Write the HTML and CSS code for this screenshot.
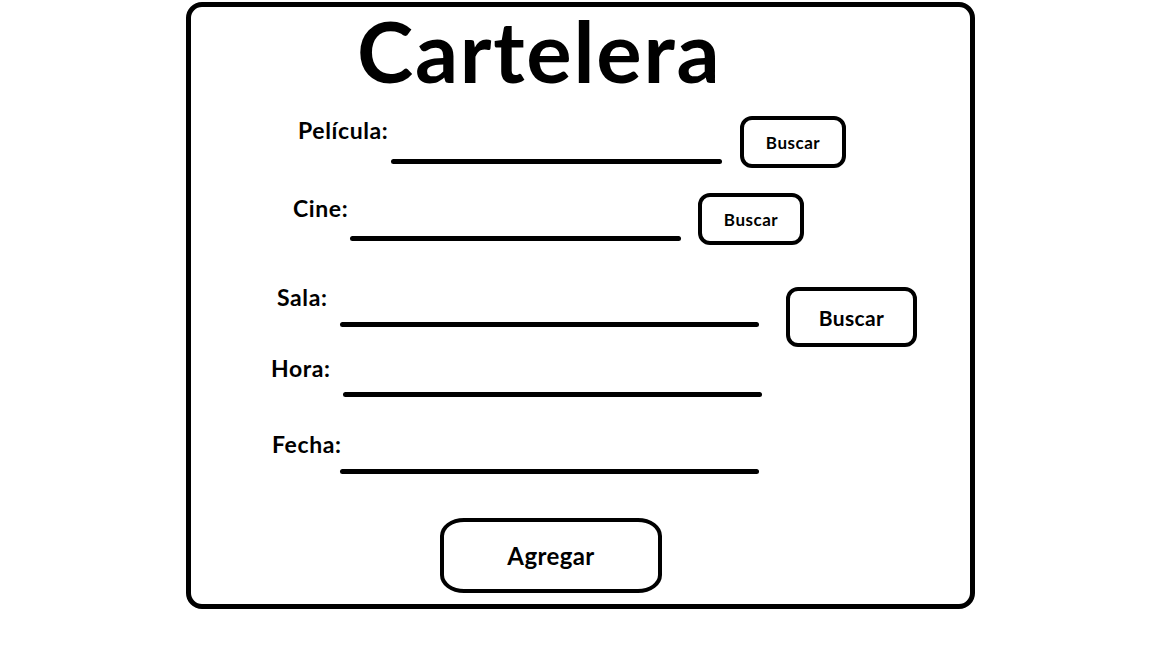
FILE: index.html
```html
<!DOCTYPE html>
<html lang="es">
<head>
<meta charset="utf-8">
<title>Cartelera</title>
<link rel="stylesheet" href="styles.css">
</head>
<body>
<div class="card">
  <h1 class="title">Cartelera</h1>
  <div class="row row-pelicula">
    <span class="label">Película:</span>
    <span class="line"></span>
    <button class="btn btn-sm">Buscar</button>
  </div>
  <div class="row row-cine">
    <span class="label">Cine:</span>
    <span class="line"></span>
    <button class="btn btn-sm">Buscar</button>
  </div>
  <div class="row row-sala">
    <span class="label">Sala:</span>
    <span class="line"></span>
    <button class="btn btn-md">Buscar</button>
  </div>
  <div class="row row-hora">
    <span class="label">Hora:</span>
    <span class="line"></span>
  </div>
  <div class="row row-fecha">
    <span class="label">Fecha:</span>
    <span class="line"></span>
  </div>
  <div class="actions">
    <button class="btn btn-lg">Agregar</button>
  </div>
</div>
</body>
</html>
```

FILE: styles.css
```css
html, body {
  margin: 0;
  padding: 0;
  background: #fff;
}
body {
  font-family: Lato, "Liberation Sans", sans-serif;
  color: #000;
}
.card {
  box-sizing: border-box;
  margin: 2px 0 0 186px;
  width: 789px;
  height: 607px;
  border: 5px solid #000;
  border-radius: 16px;
  display: flex;
  flex-direction: column;
}
.title {
  margin: 0;
  padding-left: 166px;
  font-size: 85px;
  line-height: 86px;
  font-weight: 700;
  letter-spacing: 1.75px;
}
.row {
  display: flex;
  align-items: flex-start;
}
.label {
  font-size: 23px;
  line-height: 26px;
  font-weight: 700;
  letter-spacing: 0.6px;
  white-space: nowrap;
  flex: none;
}
.line {
  display: block;
  height: 5px;
  background: #000;
  border-radius: 3px;
  flex: none;
}
.btn {
  box-sizing: border-box;
  background: #fff;
  border: 4px solid #000;
  border-radius: 12px;
  font-family: Lato, "Liberation Sans", sans-serif;
  font-weight: 700;
  color: #000;
  padding: 0;
  flex: none;
}
.btn-sm {
  width: 106px;
  height: 52px;
  font-size: 17px;
  letter-spacing: 0.5px;
}
.btn-md {
  width: 131px;
  height: 60px;
  font-size: 21px;
  letter-spacing: 0.4px;
}
.btn-lg {
  width: 222px;
  height: 75px;
  font-size: 24px;
  letter-spacing: 0.4px;
  border-radius: 24px / 18px;
}

/* Película */
.row-pelicula { margin-top: 23px; padding-left: 107px; height: 52px; }
.row-pelicula .label { width: 93px; margin-top: 1px; }
.row-pelicula .line { width: 331px; margin-top: 43px; }
.row-pelicula .btn { margin-left: 18px; }

/* Cine */
.row-cine { margin-top: 25px; padding-left: 102px; height: 52px; }
.row-cine .label { width: 57px; margin-top: 2px; }
.row-cine .line { width: 331px; margin-top: 43px; }
.row-cine .btn { margin-left: 17px; }

/* Sala */
.row-sala { margin-top: 39px; padding-left: 86px; height: 63px; }
.row-sala .label { width: 63px; }
.row-sala .line { width: 419px; margin-top: 38px; }
.row-sala .btn { margin-left: 27px; margin-top: 3px; }

/* Hora */
.row-hora { margin-top: 8px; padding-left: 80px; height: 41px; }
.row-hora .label { width: 72px; }
.row-hora .line { width: 419px; margin-top: 37px; }

/* Fecha */
.row-fecha { margin-top: 35px; padding-left: 81px; height: 45px; }
.row-fecha .label { width: 68px; }
.row-fecha .line { width: 419px; margin-top: 38px; }

.actions {
  margin-top: 42px;
  padding-left: 249px;
  display: flex;
}
```
